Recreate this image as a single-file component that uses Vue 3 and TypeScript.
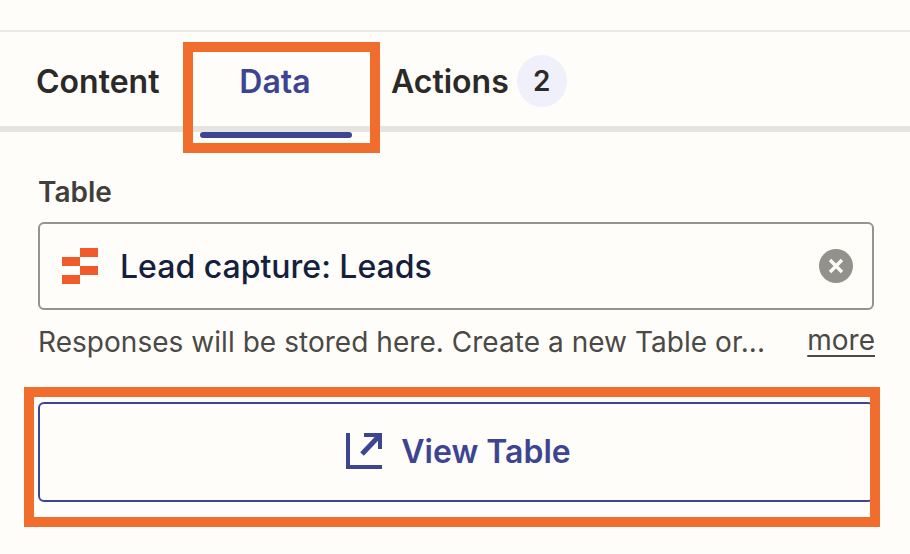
<script setup lang="ts">
interface Tab {
  id: string
  label: string
  count?: number
}

const tabs: Tab[] = [
  { id: 'content', label: 'Content' },
  { id: 'data', label: 'Data' },
  { id: 'actions', label: 'Actions', count: 2 }
]
const activeTab = 'data'
</script>

<template>
  <div class="panel">
    <div class="tabs">
      <div
        v-for="tab in tabs"
        :key="tab.id"
        class="tab"
        :class="[`tab-${tab.id}`, { active: tab.id === activeTab }]"
      >
        <span>{{ tab.label }}</span>
        <span v-if="tab.count" class="badge">{{ tab.count }}</span>
      </div>
      <!-- callout round the Data tab -->
      <div class="callout callout-tab"></div>
    </div>

    <div class="body">
      <label class="field-label">Table</label>
      <div class="select">
        <svg class="table-icon" viewBox="0 0 36 36" aria-hidden="true">
          <path d="M18 0h18v9H18zM0 9h18v9H0zM18 18h18v9H18zM0 27h18v9H0z" />
        </svg>
        <span class="select-value">Lead capture: Leads</span>
        <svg class="clear-icon" viewBox="0 0 34 34" aria-hidden="true">
          <circle cx="17" cy="17" r="17" fill="#93918c" />
          <path d="M11 11l12 12m0-12L11 23" stroke="#fffdf9" stroke-width="3.4" fill="none" />
        </svg>
      </div>
      <div class="help">
        <span class="help-text">Responses will be stored here. Create a new Table or...</span>
        <a class="more">more</a>
      </div>

      <div class="button-wrap">
        <button class="view-button">
          <svg class="open-icon" viewBox="0 0 36 36" fill="none" stroke="currentColor" stroke-width="4" aria-hidden="true">
            <path d="M2 0V34H36" />
            <path d="M18 2H34V16" />
            <path d="M34 2L16 21" stroke-width="5" />
          </svg>
          <span>View Table</span>
        </button>
        <!-- callout round the button -->
        <div class="callout callout-button"></div>
      </div>
    </div>
  </div>
</template>

<style>
html,
body {
  margin: 0;
  background: #fffdf9;
}
</style>

<style scoped>
.panel {
  width: 910px;
  height: 554px;
  overflow: hidden;
  box-sizing: border-box;
  padding-top: 30px;
  background: #fffdf9;
  font-family: Inter, "Liberation Sans", sans-serif;
}

.tabs {
  position: relative;
  display: flex;
  height: 102px;
  box-sizing: border-box;
  padding-left: 36px;
  border-top: 2px solid #ece9e4;
  border-bottom: 6px solid #e6e4e0;
}

.tab {
  display: flex;
  align-items: center;
  height: 100px;
  padding-bottom: 2px;
  box-sizing: border-box;
  font-size: 32px;
  font-weight: 600;
  color: #2b2a28;
}

.tab-content {
  width: 164px;
}

.tab-data {
  width: 152px;
  padding-right: 2px;
  justify-content: center;
  margin-right: 39px;
}

.tab.active {
  position: relative;
  color: #3d4592;
}

.tab.active::after {
  content: "";
  position: absolute;
  left: 0;
  right: 0;
  bottom: -6px;
  height: 6px;
  border-radius: 3px;
  background: #3d4592;
}

.badge {
  display: flex;
  align-items: center;
  justify-content: center;
  width: 50px;
  height: 52px;
  margin-left: 8px;
  border-radius: 50%;
  background: #eff0fa;
  font-size: 28px;
}

.callout {
  position: absolute;
  box-sizing: border-box;
  border: 10px solid #f16d2d;
  pointer-events: none;
}

.callout-tab {
  left: 183px;
  top: 10px;
  width: 197px;
  height: 111px;
}

.body {
  padding: 44px 36px 0 38px;
}

.field-label {
  display: block;
  height: 32px;
  line-height: 32px;
  font-size: 28px;
  font-weight: 600;
  color: #403f3c;
}

.select {
  display: flex;
  align-items: center;
  height: 88px;
  box-sizing: border-box;
  margin-top: 14px;
  padding: 0 19px 0 22px;
  border: 2px solid #95938e;
  border-radius: 6px;
}

.table-icon {
  width: 36px;
  height: 36px;
  fill: #f15a2b;
}

.select-value {
  flex: 1;
  margin-left: 22px;
  font-size: 32px;
  font-weight: 500;
  color: #13213f;
}

.clear-icon {
  width: 34px;
  height: 34px;
}

.help {
  display: flex;
  justify-content: space-between;
  align-items: center;
  height: 34px;
  margin-top: 15px;
  font-size: 28px;
  color: #4a4945;
}

.help-text {
  white-space: nowrap;
  letter-spacing: 0.04px;
}

.more {
  position: relative;
  top: -2px;
  margin-right: -1px;
  text-decoration: underline;
  text-underline-offset: 5px;
}

.button-wrap {
  position: relative;
  margin-top: 43px;
}

.view-button {
  display: flex;
  align-items: center;
  justify-content: center;
  gap: 19px;
  width: 100%;
  height: 100px;
  padding: 0 0 2px 5px;
  border: 2px solid #3d4592;
  border-radius: 6px;
  background: transparent;
  font-family: inherit;
  font-size: 32px;
  font-weight: 600;
  color: #3d4592;
}

.open-icon {
  width: 36px;
  height: 36px;
}

.callout-button {
  left: -14px;
  top: -15px;
  width: 856px;
  height: 140px;
}
</style>
